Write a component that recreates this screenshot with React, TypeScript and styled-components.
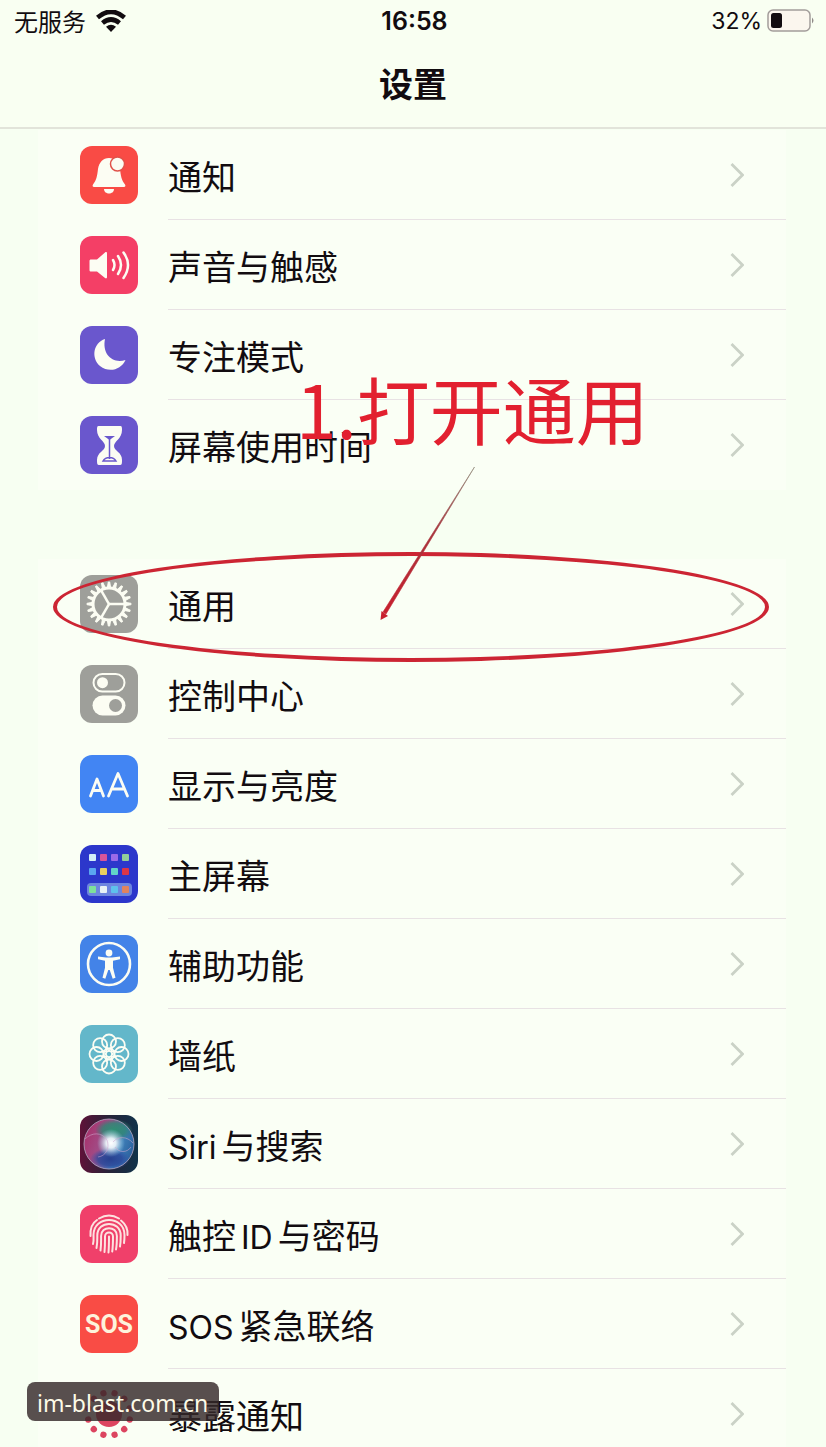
import React from "react";
import styled, { createGlobalStyle } from "styled-components";

const GlobalStyle = createGlobalStyle`
  * { box-sizing: border-box; }
  body { margin: 0; background: #f7fff2; }
`;

const cjk = `"Noto Sans CJK SC", sans-serif`;

const Screen = styled.div`
  position: relative;
  display: flex;
  flex-direction: column;
  height: 100vh;
  overflow: hidden;
  background: #f7fff2;
  color: #120c10;
  font-family: ${cjk};
`;

const Header = styled.header`
  flex: none;
  background: #f9fff2;
  border-bottom: 2px solid #e2e4da;
`;

const StatusBar = styled.div`
  display: grid;
  grid-template-columns: 1fr auto 1fr;
  align-items: center;
  height: 42px;
  padding: 0 11px 0 14px;
  font-size: 24px;
  line-height: 32px;
`;

const Carrier = styled.div`
  display: flex;
  align-items: center;
  gap: 10px;
`;

const Clock = styled.time`
  font-family: Inter, sans-serif;
  font-size: 25px;
  font-weight: 600;
`;

const Battery = styled.div`
  display: flex;
  align-items: center;
  justify-content: flex-end;
  gap: 5px;
  font-family: Inter, sans-serif;
  font-size: 23px;
`;

const Title = styled.h1`
  display: flex;
  align-items: center;
  justify-content: center;
  height: 85px;
  margin: 0;
  padding-bottom: 4px;
  font-size: 34px;
  font-weight: 700;
  line-height: 48px;
`;

const Scroll = styled.main`
  flex: 1;
  min-height: 0;
  padding: 1px 40px 0 38px;
  overflow: hidden auto;
  scrollbar-width: none;
`;

const Group = styled.ul`
  margin: 0 0 69px;
  padding: 0 0 0 42px;
  list-style: none;
  background: #fafff5;
`;

const Row = styled.li`
  position: relative;
`;

const RowLink = styled.a`
  display: flex;
  align-items: center;
  gap: 30px;
  height: 90px;
  color: inherit;
  text-decoration: none;
`;

const RowBody = styled.span<{ $last: boolean }>`
  flex: 1;
  display: flex;
  align-items: center;
  justify-content: space-between;
  height: 90px;
  padding-right: 42px;
  border-bottom: 1px solid ${(p) => (p.$last ? "transparent" : "#e8e2e4")};
`;

const Label = styled.span`
  padding-top: 2px;
  font-size: 34px;
  line-height: 48px;
  white-space: nowrap;
`;

const Latin = styled.span<{ $lead?: boolean }>`
  margin: 0 5px 0 ${(p) => (p.$lead ? 0 : 5)}px;
  font-family: Inter, sans-serif;
  font-size: 32px;
  line-height: 32px;
`;

const Ring = styled.div`
  position: absolute;
  z-index: 2;
  top: -7px;
  left: -27px;
  right: 17px;
  height: 110px;
  border: 4px solid #cc2533;
  border-radius: 50%;
  pointer-events: none;
`;

const Note = styled.div`
  position: absolute;
  z-index: 3;
  bottom: 202px;
  left: 216px;
  color: #e2202f;
  font-size: 73px;
  line-height: 80px;
  white-space: nowrap;
  pointer-events: none;
`;

const Arrow = styled.svg`
  position: absolute;
  z-index: 3;
  top: -93px;
  left: 298px;
  pointer-events: none;
`;

const Watermark = styled.div`
  position: absolute;
  z-index: 4;
  left: 27px;
  bottom: 26px;
  padding: 6px 11px 3px 10px;
  border-radius: 8px;
  background: rgba(52, 40, 42, 0.82);
  color: #fdfbe8;
  font-family: "Noto Sans", sans-serif;
  font-size: 23px;
  line-height: 30px;
`;

const Tile: React.FC<{ fill: string; children: React.ReactNode }> = ({ fill, children }) => (
  <svg width="58" height="58" viewBox="0 0 58 58" fill="none" aria-hidden="true">
    <rect width="58" height="58" rx="12" fill={fill} />
    {children}
  </svg>
);

const W = "#fcfdf3";
const turn = (n: number) => Array.from({ length: n }, (_, i) => (360 / n) * i);

const Bell = () => (
  <Tile fill="#f94b45">
    <path d="M29 12c-6 0-10 4.500-11 11-.8 7-1.500 11-5 15.500-.8 1.200-.4 2.500 1 2.500h30c1.400 0 1.800-1.300 1-2.500-3.500-4.500-4.200-8.500-5-15.500C39 16 35 12 29 12z" fill={W} />
    <path d="M24 43h10c0 6-10 6-10 0z" fill={W} />
    <circle cx="37.500" cy="18" r="7" fill={W} stroke="#e0524a" strokeWidth="1.500" />
  </Tile>
);
const Sound = () => (
  <Tile fill="#f43f66">
    <path d="M11 23.500h6l8-7c1-.8 2-.5 2 1v23.500c0 1.500-1 1.800-2 1L17 35.500h-6c-1 0-1.500-.5-1.500-1.500v-9c0-1 .5-1.500 1.500-1.500z" fill={W} />
    <g stroke={W} strokeWidth="2.500" strokeLinecap="round">
      <path d="M33 24q3 5 0 10M38 20q6 9 0 18M43.500 16.500q9 12.500 0 25.500" />
    </g>
  </Tile>
);
const Moon = () => (
  <Tile fill="#6a57cd">
    <path d="M25 13C13 17 11 32 20 40c9 7 21 4 25.500-6C32 38 22 28 25 13z" fill={W} />
  </Tile>
);
const Hourglass = () => (
  <Tile fill="#6a57cd">
    <path d="M18.500 10h22c1.500 0 1.500 2 1.500 4 0 9-8 11-8 16s8 6 8 14c0 3 0 5-2 5H19c-2 0-2-2-2-5 0-8 8-9 8-14s-8-7-8-16c0-2 0-4 1.500-4z" fill={W} />
    <path d="M24 20h11l-5.500 4z" fill="#6a57cd" />
    <path d="M29.500 22v21M23 45c2-3.500 4-3.500 6.500-3.500S34 41.500 36 45z" stroke="#6a57cd" strokeWidth="1.500" />
  </Tile>
);
const Gear = () => (
  <Tile fill="#9e9f9a">
    <g transform="translate(29 29)" stroke={W}>
      <circle r="16" strokeWidth="3" />
      {turn(20).map((a) => (
        <path key={a} d="M-1.500 -17L-.7 -22H.7L1.500 -17z" fill={W} strokeWidth="1" transform={`rotate(${a})`} />
      ))}
      {[90, 210, 330].map((a) => (
        <path key={a} d="M0 0V-16" strokeWidth="2.500" transform={`rotate(${a})`} />
      ))}
    </g>
  </Tile>
);
const Switches = () => (
  <Tile fill="#9e9f9a">
    <rect x="13.500" y="9" width="31" height="17.500" rx="8.750" stroke={W} strokeWidth="2" />
    <circle cx="22.500" cy="17.700" r="5.500" fill={W} />
    <rect x="12.500" y="30.500" width="33" height="20" rx="10" fill={W} />
    <circle cx="35.500" cy="40.500" r="6.500" fill="#9e9f9a" />
  </Tile>
);
const TextSize = () => (
  <Tile fill="#4285f3">
    <g stroke={W} strokeWidth="2.800" strokeLinecap="round" strokeLinejoin="round">
      <path d="M10.500 41L17 24l6.500 17M12.800 35.500h8.500" />
      <path d="M28.500 41L38 18.500 47.500 41M32 34h12" />
    </g>
  </Tile>
);
const HomeScreen = () => {
  const rows = [
    ["#d3eef7", "#d6559a", "#9a6ae8", "#92cf9a"],
    ["#5aa6f0", "#e8d060", "#62d4c8", "#dc3648"],
    ["#7ee09a", "#e8f2f5", "#5ec0ec", "#e0835e"],
  ];
  const ys = [9, 23, 41];
  return (
    <Tile fill="#2c37cb">
      <rect x="7" y="38" width="45" height="13" rx="4" fill="#6d85df" />
      {rows.map((r, y) => r.map((c, x) => <rect key={`${x}-${y}`} x={9 + x * 11} y={ys[y]} width="7" height="7" rx="1" fill={c} />))}
    </Tile>
  );
};
const Access = () => (
  <Tile fill="#4383e8">
    <circle cx="29" cy="29" r="21" stroke={W} strokeWidth="2.600" />
    <circle cx="29" cy="18" r="3.400" fill={W} />
    <path d="M18 21.500l8 1h6l8-1v2.800l-7 1.500v7l2.500 10-2.800.9L29.700 35h-1.400L25.300 43.700l-2.800-.9L25 32.800v-7L18 24.300z" fill={W} />
  </Tile>
);
const Flower = () => (
  <Tile fill="#63b7ca">
    <g transform="translate(29 29)" stroke={W} strokeWidth="1.800">
      {turn(8).map((a) => (
        <circle key={a} cy="-12.500" r="7" transform={`rotate(${a})`} />
      ))}
      {turn(8).map((a) => (
        <path key={a} d="M-2.500 -6.200L0 -3.200 2.500 -6.200" strokeWidth="1.400" transform={`rotate(${a})`} />
      ))}
      <circle r="3" strokeWidth="1.400" />
    </g>
  </Tile>
);
const Siri = () => (
  <Tile fill="url(#siriBack)">
    <defs>
      <linearGradient id="siriBack" x1="0" y1="0" x2="1" y2="0">
        <stop offset="0" stopColor="#5f1238" />
        <stop offset=".5" stopColor="#262338" />
        <stop offset="1" stopColor="#10334a" />
      </linearGradient>
      <linearGradient id="siriOrb" x1="0" y1="0.300" x2="1" y2="0.700">
        <stop offset="0" stopColor="#a8326c" />
        <stop offset=".4" stopColor="#a0508a" />
        <stop offset=".7" stopColor="#3f7fb8" />
        <stop offset="1" stopColor="#2a5f9c" />
      </linearGradient>
      <radialGradient id="siriGlow">
        <stop offset="0" stopColor="#fff" />
        <stop offset=".35" stopColor="#f2fdff" stopOpacity=".9" />
        <stop offset="1" stopColor="#9fd8ec" stopOpacity="0" />
      </radialGradient>
      <radialGradient id="siriGreen">
        <stop offset="0" stopColor="#2f8f74" />
        <stop offset=".6" stopColor="#2f8774" stopOpacity=".8" />
        <stop offset="1" stopColor="#2c7a6c" stopOpacity="0" />
      </radialGradient>
      <radialGradient id="siriBlue">
        <stop offset="0" stopColor="#27408f" />
        <stop offset=".6" stopColor="#2b479a" stopOpacity=".8" />
        <stop offset="1" stopColor="#3150ae" stopOpacity="0" />
      </radialGradient>
    </defs>
    <circle cx="29" cy="29" r="25" fill="url(#siriOrb)" />
    <ellipse cx="34" cy="15" rx="19" ry="11" fill="url(#siriGreen)" />
    <ellipse cx="30" cy="44" rx="20" ry="11" fill="url(#siriBlue)" />
    <circle cx="31" cy="28" r="14" fill="url(#siriGlow)" />
    <path d="M5 24c7-7 17-7 22 1 3 8-1 16-9 17M33 27c5-6 14-6 20 1M35 32c4 6 12 6 16 0" stroke="#d0a8cf" strokeOpacity=".55" />
    <circle cx="29" cy="29" r="25" stroke="#b4a6c0" strokeOpacity=".8" />
  </Tile>
);
const Finger = () => (
  <Tile fill="#f0406a">
    <g stroke="#fde3e0" strokeWidth="2" strokeLinecap="round">
      <path d="M19 13.500q10-6 20 0M10.500 31C10 22 13 17.500 17 15M41 15.500c5 4 7 8 6.500 14.500" />
      <path d="M13 39c1-4 .5-6 .5-9 0-20 31-20 31 0 0 3 0 5-.5 8" />
      <path d="M16.500 43c1-5 .8-9 .8-12.500 0-15.500 23.400-15.500 23.400 0 0 4 0 7-.7 11" />
      <path d="M20.500 45.500c.8-6 .6-10 .6-14.500 0-10.500 15.800-10.500 15.800 0 0 5 0 9-.9 13.500" />
      <path d="M24.500 47c.6-6 .5-11 .5-15.500 0-5.500 8-5.500 8 0 0 5.500 0 10-.8 15M29 31.500c0 6 0 10-.5 16" />
    </g>
  </Tile>
);
const Sos = () => (
  <Tile fill="#f94c45">
    <text x="29" y="38" textAnchor="middle" fill="#fdf3dc" fontFamily="Roboto, sans-serif" fontWeight="700" fontSize="25">SOS</text>
  </Tile>
);
const Exposure = () => (
  <Tile fill="transparent">
    <g transform="translate(29 29)" fill="#dc4560">
      <circle r="13" />
      {turn(12).map((a) => (
        <circle key={a} cy="-21.500" r="3.200" transform={`rotate(${a + 15})`} />
      ))}
    </g>
  </Tile>
);

const Chevron = () => (
  <svg width="14" height="26" viewBox="0 0 14 26" fill="none" aria-hidden="true">
    <path d="M1.500 2L12.500 13 1.500 24" stroke="#cad2c6" strokeWidth="2.800" />
  </svg>
);

type Item = { icon: React.FC; label: React.ReactNode; marked?: boolean };

const alerts: Item[] = [
  { icon: Bell, label: "通知" },
  { icon: Sound, label: "声音与触感" },
  { icon: Moon, label: "专注模式" },
  { icon: Hourglass, label: "屏幕使用时间" },
];

const system: Item[] = [
  { icon: Gear, label: "通用", marked: true },
  { icon: Switches, label: "控制中心" },
  { icon: TextSize, label: "显示与亮度" },
  { icon: HomeScreen, label: "主屏幕" },
  { icon: Access, label: "辅助功能" },
  { icon: Flower, label: "墙纸" },
  { icon: Siri, label: <><Latin $lead>Siri</Latin>与搜索</> },
  { icon: Finger, label: <>触控<Latin>ID</Latin>与密码</> },
  { icon: Sos, label: <><Latin $lead>SOS</Latin>紧急联络</> },
  { icon: Exposure, label: "暴露通知" },
];

const Guide = () => (
  <>
    <Ring />
    <Note>1.打开通用</Note>
    <Arrow width="100" height="156" viewBox="0 0 100 156" fill="none" aria-hidden="true">
      <defs>
        <linearGradient id="shaft" x1="1" y1="0" x2="0" y2="1">
          <stop offset="0" stopColor="#8d8878" />
          <stop offset=".45" stopColor="#a8333c" />
          <stop offset="1" stopColor="#c8202e" />
        </linearGradient>
      </defs>
      <path d="M96.500 1L5 146l3 2z" fill="url(#shaft)" stroke="url(#shaft)" strokeWidth=".6" />
      <path d="M2.500 154l1-9 6.500 5z" fill="#c8202e" />
    </Arrow>
  </>
);

const Section = ({ items }: { items: Item[] }) => (
  <Group>
    {items.map(({ icon: Icon, label, marked }, i) => (
      <Row key={i}>
        <RowLink href="#">
          <Icon />
          <RowBody $last={i === items.length - 1}>
            <Label>{label}</Label>
            <Chevron />
          </RowBody>
        </RowLink>
        {marked && <Guide />}
      </Row>
    ))}
  </Group>
);

export default function App() {
  return (
    <Screen lang="zh-CN">
      <GlobalStyle />
      <Header>
        <StatusBar>
          <Carrier>
            无服务
            <svg width="30" height="22" viewBox="0 0 30 22" fill="none" aria-label="Wi-Fi">
              <path d="M1.500 7.500Q15-4 28.500 7.500M6.500 13q8.500-7 17 0" stroke="#120c10" strokeWidth="4.600" />
              <path d="M15 22l-5-5.200q5-4 10 0z" fill="#120c10" />
            </svg>
          </Carrier>
          <Clock>16:58</Clock>
          <Battery>
            32%
            <svg width="48" height="24" viewBox="0 0 48 24" fill="none" aria-hidden="true">
              <rect x="1" y="1" width="42" height="21" rx="5" fill="#fbf6ee" stroke="#a39d9b" strokeWidth="1.500" />
              <rect x="4" y="4" width="11" height="15" rx="2.500" fill="#120c10" />
              <path d="M45 8.500q3 3 0 6z" fill="#8f8a88" />
            </svg>
          </Battery>
        </StatusBar>
        <Title>设置</Title>
      </Header>
      <Scroll>
        <Section items={alerts} />
        <Section items={system} />
      </Scroll>
      <Watermark>im-blast.com.cn</Watermark>
    </Screen>
  );
}
